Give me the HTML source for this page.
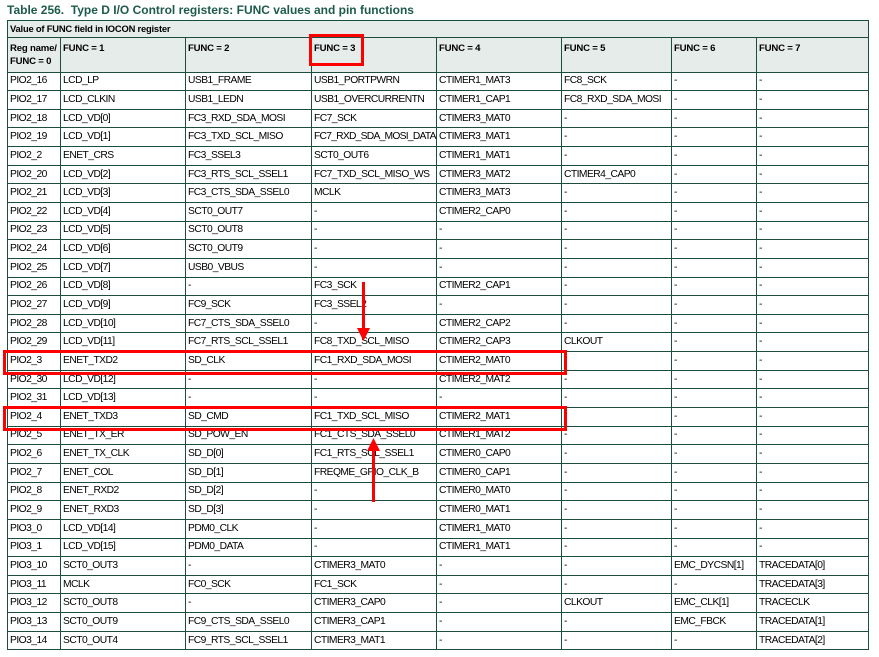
<!DOCTYPE html>
<html><head><meta charset="utf-8"><style>
body{margin:0;background:#fff;width:879px;height:657px;overflow:hidden;position:relative;font-family:"Liberation Sans",Arial,sans-serif;}
.t{position:absolute;left:7px;top:3px;font-size:12px;font-weight:bold;color:#1d5a4c;white-space:nowrap;}
table{position:absolute;left:7px;top:20px;border-collapse:collapse;table-layout:fixed;width:861px;}
td{border:1px solid #1d4d3f;font-size:10.3px;line-height:12px;padding:0 0 0 2px;height:17.65px;white-space:nowrap;overflow:hidden;color:#000;letter-spacing:-0.55px;box-sizing:content-box}
tr.h td{background:#e6ecea;font-weight:bold;vertical-align:top;padding-top:4px;height:29.5px;line-height:13px;font-size:9.6px;letter-spacing:-0.2px}
tr.c td{background:#e6ecea;font-weight:bold;height:16px;font-size:9.4px;letter-spacing:-0.2px}
.r{position:absolute;border:3px solid #f00;}
.l{position:absolute;background:#f00;width:3px;}
</style></head><body>
<div class="t">Table 256.&nbsp; Type D I/O Control registers: FUNC values and pin functions</div>
<table>
<colgroup><col style="width:53px"><col style="width:125px"><col style="width:126px"><col style="width:125px"><col style="width:125px"><col style="width:110px"><col style="width:85px"><col style="width:112px"></colgroup>
<tr class="c"><td colspan="8">Value of FUNC field in IOCON register</td></tr>
<tr class="h"><td>Reg name/<br>FUNC = 0</td><td>FUNC = 1</td><td>FUNC = 2</td><td>FUNC = 3</td><td>FUNC = 4</td><td>FUNC = 5</td><td>FUNC = 6</td><td>FUNC = 7</td></tr>
<tr><td>PIO2_16</td><td>LCD_LP</td><td>USB1_FRAME</td><td>USB1_PORTPWRN</td><td>CTIMER1_MAT3</td><td>FC8_SCK</td><td>-</td><td>-</td></tr>
<tr><td>PIO2_17</td><td>LCD_CLKIN</td><td>USB1_LEDN</td><td>USB1_OVERCURRENTN</td><td>CTIMER1_CAP1</td><td>FC8_RXD_SDA_MOSI</td><td>-</td><td>-</td></tr>
<tr><td>PIO2_18</td><td>LCD_VD[0]</td><td>FC3_RXD_SDA_MOSI</td><td>FC7_SCK</td><td>CTIMER3_MAT0</td><td>-</td><td>-</td><td>-</td></tr>
<tr><td>PIO2_19</td><td>LCD_VD[1]</td><td>FC3_TXD_SCL_MISO</td><td style="letter-spacing:-0.75px">FC7_RXD_SDA_MOSI_DATA</td><td>CTIMER3_MAT1</td><td>-</td><td>-</td><td>-</td></tr>
<tr><td>PIO2_2</td><td>ENET_CRS</td><td>FC3_SSEL3</td><td>SCT0_OUT6</td><td>CTIMER1_MAT1</td><td>-</td><td>-</td><td>-</td></tr>
<tr><td>PIO2_20</td><td>LCD_VD[2]</td><td>FC3_RTS_SCL_SSEL1</td><td>FC7_TXD_SCL_MISO_WS</td><td>CTIMER3_MAT2</td><td>CTIMER4_CAP0</td><td>-</td><td>-</td></tr>
<tr><td>PIO2_21</td><td>LCD_VD[3]</td><td>FC3_CTS_SDA_SSEL0</td><td>MCLK</td><td>CTIMER3_MAT3</td><td>-</td><td>-</td><td>-</td></tr>
<tr><td>PIO2_22</td><td>LCD_VD[4]</td><td>SCT0_OUT7</td><td>-</td><td>CTIMER2_CAP0</td><td>-</td><td>-</td><td>-</td></tr>
<tr><td>PIO2_23</td><td>LCD_VD[5]</td><td>SCT0_OUT8</td><td>-</td><td>-</td><td>-</td><td>-</td><td>-</td></tr>
<tr><td>PIO2_24</td><td>LCD_VD[6]</td><td>SCT0_OUT9</td><td>-</td><td>-</td><td>-</td><td>-</td><td>-</td></tr>
<tr><td>PIO2_25</td><td>LCD_VD[7]</td><td>USB0_VBUS</td><td>-</td><td>-</td><td>-</td><td>-</td><td>-</td></tr>
<tr><td>PIO2_26</td><td>LCD_VD[8]</td><td>-</td><td>FC3_SCK</td><td>CTIMER2_CAP1</td><td>-</td><td>-</td><td>-</td></tr>
<tr><td>PIO2_27</td><td>LCD_VD[9]</td><td>FC9_SCK</td><td>FC3_SSEL2</td><td>-</td><td>-</td><td>-</td><td>-</td></tr>
<tr><td>PIO2_28</td><td>LCD_VD[10]</td><td>FC7_CTS_SDA_SSEL0</td><td>-</td><td>CTIMER2_CAP2</td><td>-</td><td>-</td><td>-</td></tr>
<tr><td>PIO2_29</td><td>LCD_VD[11]</td><td>FC7_RTS_SCL_SSEL1</td><td>FC8_TXD_SCL_MISO</td><td>CTIMER2_CAP3</td><td>CLKOUT</td><td>-</td><td>-</td></tr>
<tr><td>PIO2_3</td><td>ENET_TXD2</td><td>SD_CLK</td><td>FC1_RXD_SDA_MOSI</td><td>CTIMER2_MAT0</td><td>-</td><td>-</td><td>-</td></tr>
<tr><td>PIO2_30</td><td>LCD_VD[12]</td><td>-</td><td>-</td><td>CTIMER2_MAT2</td><td>-</td><td>-</td><td>-</td></tr>
<tr><td>PIO2_31</td><td>LCD_VD[13]</td><td>-</td><td>-</td><td>-</td><td>-</td><td>-</td><td>-</td></tr>
<tr><td>PIO2_4</td><td>ENET_TXD3</td><td>SD_CMD</td><td>FC1_TXD_SCL_MISO</td><td>CTIMER2_MAT1</td><td>-</td><td>-</td><td>-</td></tr>
<tr><td>PIO2_5</td><td>ENET_TX_ER</td><td>SD_POW_EN</td><td>FC1_CTS_SDA_SSEL0</td><td>CTIMER1_MAT2</td><td>-</td><td>-</td><td>-</td></tr>
<tr><td>PIO2_6</td><td>ENET_TX_CLK</td><td>SD_D[0]</td><td>FC1_RTS_SCL_SSEL1</td><td>CTIMER0_CAP0</td><td>-</td><td>-</td><td>-</td></tr>
<tr><td>PIO2_7</td><td>ENET_COL</td><td>SD_D[1]</td><td>FREQME_GPIO_CLK_B</td><td>CTIMER0_CAP1</td><td>-</td><td>-</td><td>-</td></tr>
<tr><td>PIO2_8</td><td>ENET_RXD2</td><td>SD_D[2]</td><td>-</td><td>CTIMER0_MAT0</td><td>-</td><td>-</td><td>-</td></tr>
<tr><td>PIO2_9</td><td>ENET_RXD3</td><td>SD_D[3]</td><td>-</td><td>CTIMER0_MAT1</td><td>-</td><td>-</td><td>-</td></tr>
<tr><td>PIO3_0</td><td>LCD_VD[14]</td><td>PDM0_CLK</td><td>-</td><td>CTIMER1_MAT0</td><td>-</td><td>-</td><td>-</td></tr>
<tr><td>PIO3_1</td><td>LCD_VD[15]</td><td>PDM0_DATA</td><td>-</td><td>CTIMER1_MAT1</td><td>-</td><td>-</td><td>-</td></tr>
<tr><td>PIO3_10</td><td>SCT0_OUT3</td><td>-</td><td>CTIMER3_MAT0</td><td>-</td><td>-</td><td>EMC_DYCSN[1]</td><td>TRACEDATA[0]</td></tr>
<tr><td>PIO3_11</td><td>MCLK</td><td>FC0_SCK</td><td>FC1_SCK</td><td>-</td><td>-</td><td>-</td><td>TRACEDATA[3]</td></tr>
<tr><td>PIO3_12</td><td>SCT0_OUT8</td><td>-</td><td>CTIMER3_CAP0</td><td>-</td><td>CLKOUT</td><td>EMC_CLK[1]</td><td>TRACECLK</td></tr>
<tr><td>PIO3_13</td><td>SCT0_OUT9</td><td>FC9_CTS_SDA_SSEL0</td><td>CTIMER3_CAP1</td><td>-</td><td>-</td><td>EMC_FBCK</td><td>TRACEDATA[1]</td></tr>
<tr><td>PIO3_14</td><td>SCT0_OUT4</td><td>FC9_RTS_SCL_SSEL1</td><td>CTIMER3_MAT1</td><td>-</td><td>-</td><td>-</td><td>TRACEDATA[2]</td></tr>
</table>
<div class="r" style="left:309px;top:34px;width:49px;height:26px"></div>
<div class="r" style="left:3px;top:350px;width:558px;height:19px"></div>
<div class="r" style="left:3px;top:406px;width:558px;height:19px"></div>
<div class="l" style="left:362px;top:282px;height:50px"></div>
<svg style="position:absolute;left:355px;top:328px" width="17" height="14"><polygon points="2,0 15,0 8.5,13" fill="#f00"/></svg>
<div class="l" style="left:372px;top:450px;height:52px"></div>
<svg style="position:absolute;left:365px;top:437px" width="17" height="14"><polygon points="2,14 15,14 8.5,1" fill="#f00"/></svg>
</body></html>
